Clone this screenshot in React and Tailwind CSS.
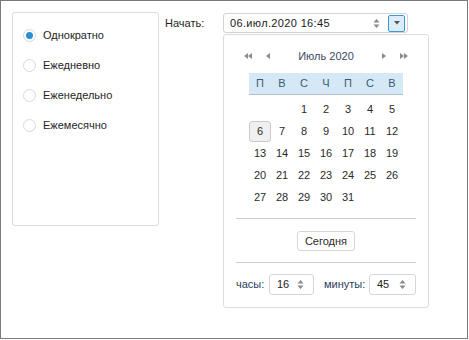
import React from 'react';

const font = { fontFamily: '"Liberation Sans", Arial, sans-serif' };

const options = ['Однократно', 'Ежедневно', 'Еженедельно', 'Ежемесячно'];
const weekDays = ['П', 'В', 'С', 'Ч', 'П', 'С', 'В'];
const days = [null, null, 1, 2, 3, 4, 5, 6, 7, 8, 9, 10, 11, 12, 13, 14, 15, 16, 17, 18, 19, 20, 21, 22, 23, 24, 25, 26, 27, 28, 29, 30, 31];

const Spin = () => (
  <svg width="7" height="11" viewBox="0 0 7 11" className="shrink-0">
    <path d="M3.5 1 L6.5 4.5 L0.5 4.5 Z" fill="#8a8a8a" />
    <path d="M3.5 10 L6.5 6.5 L0.5 6.5 Z" fill="#8a8a8a" />
  </svg>
);

const Arrow = ({ dir = 'left', double }) => (
  <svg width={double ? 8 : 4} height="6" viewBox={double ? '0 0 8 6' : '0 0 4 6'}>
    {dir === 'left' ? (
      double ? (
        <>
          <path d="M0 3 L4 0 L4 6 Z" fill="#8c8c8c" />
          <path d="M4 3 L8 0 L8 6 Z" fill="#8c8c8c" />
        </>
      ) : (
        <path d="M0 3 L4 0 L4 6 Z" fill="#8c8c8c" />
      )
    ) : double ? (
      <>
        <path d="M8 3 L4 0 L4 6 Z" fill="#8c8c8c" />
        <path d="M4 3 L0 0 L0 6 Z" fill="#8c8c8c" />
      </>
    ) : (
      <path d="M4 3 L0 0 L0 6 Z" fill="#8c8c8c" />
    )}
  </svg>
);

const TimeField = ({ value, width }) => (
  <div className={`${width} h-[21px] flex items-center justify-between pl-[7px] pr-[9px] border border-[#d6d6d6] rounded-[3px] text-[#222]`}>
    <span>{value}</span>
    <Spin />
  </div>
);

const App = () => {
  return (
    <div style={font} className="w-[468px] h-[339px] border border-[#7b7b7b] bg-white flex items-start pt-[11px] pl-[11px] text-[11px]">
      <div className="w-[147px] h-[214px] border border-[#dcdcdc] rounded-[3px] flex flex-col pt-[7px] pl-[10px]">
        {options.map((opt, i) => (
          <div key={opt} className="h-[30px] flex items-center gap-[7px] text-[#1e1e1e]">
            <span className="w-[13px] h-[13px] rounded-full border border-[#d9d9d9] bg-white flex items-center justify-center">
              {i === 0 && <span className="w-[7px] h-[7px] rounded-full bg-[#2c8fd6]" />}
            </span>
            <span>{opt}</span>
          </div>
        ))}
      </div>

      <div className="flex flex-col ml-[6px]">
        <div className="flex items-center mt-[1px]">
          <span className="w-[58px] text-[#1e1e1e]">Начать:</span>
          <div className="w-[185px] h-[20px] border border-[#d3d3d3] rounded-[3px] flex items-center pl-[6px] pr-[2px] text-[#1a1a1a]">
            <span className="flex-1 tracking-[0.35px]">06.июл.2020 16:45</span>
            <Spin />
            <span className="ml-[8px] w-[17px] h-[17px] border border-[#3d97d9] bg-[#dcedf9] rounded-[2px] flex items-center justify-center">
              <svg width="6" height="4" viewBox="0 0 6 4">
                <path d="M0 0 L6 0 L3 3.5 Z" fill="#555" />
              </svg>
            </span>
          </div>
        </div>

        <div className="ml-[58px] mt-[1px] w-[206px] h-[274px] border border-[#dcdcdc] rounded-[3px] flex flex-col">
          <div className="h-[22px] mt-[10px] flex items-center px-[20px] text-[#3b4b5f]">
            <div className="flex items-center gap-[14px]">
              <Arrow dir="left" double />
              <Arrow dir="left" />
            </div>
            <span className="flex-1 text-center">Июль 2020</span>
            <div className="flex items-center gap-[14px]">
              <Arrow dir="right" />
              <Arrow dir="right" double />
            </div>
          </div>

          <div className="mx-[25px] mt-[6px] h-[22px] grid grid-cols-7 bg-[#d5e8f6] border-b border-[#aebfcd] text-[#3e5872]">
            {weekDays.map((d, i) => (
              <span key={i} className="flex items-center justify-center">{d}</span>
            ))}
          </div>

          <div className="mx-[25px] mt-[3px] grid grid-cols-7 text-[#2a2a2a]">
            {days.map((d, i) => (
              <span key={i} className="h-[22px] flex items-center justify-center">
                {d === 6 ? (
                  <span className="w-[22px] h-[21px] flex items-center justify-center bg-[#f0f0f0] border border-[#c9c9c9] rounded-[3px]">6</span>
                ) : (
                  d
                )}
              </span>
            ))}
          </div>

          <div className="mx-[12px] mt-[10px] border-t border-[#cfcfcf]" />

          <div className="flex justify-center mt-[12px]">
            <span className="w-[58px] h-[20px] border border-[#d6d6d6] rounded-[3px] flex items-center justify-center text-[#2a2a2a]">
              Сегодня
            </span>
          </div>

          <div className="mx-[12px] mt-[11px] border-t border-[#cfcfcf]" />

          <div className="flex items-center mx-[12px] mt-[11px] text-[#2b3e5c]">
            <span className="w-[33px]">часы:</span>
            <TimeField value="16" width="w-[45px]" />
            <span className="ml-[10px] w-[45px]">минуты:</span>
            <TimeField value="45" width="w-[47px]" />
          </div>
        </div>
      </div>
    </div>
  );
};

export default App;
